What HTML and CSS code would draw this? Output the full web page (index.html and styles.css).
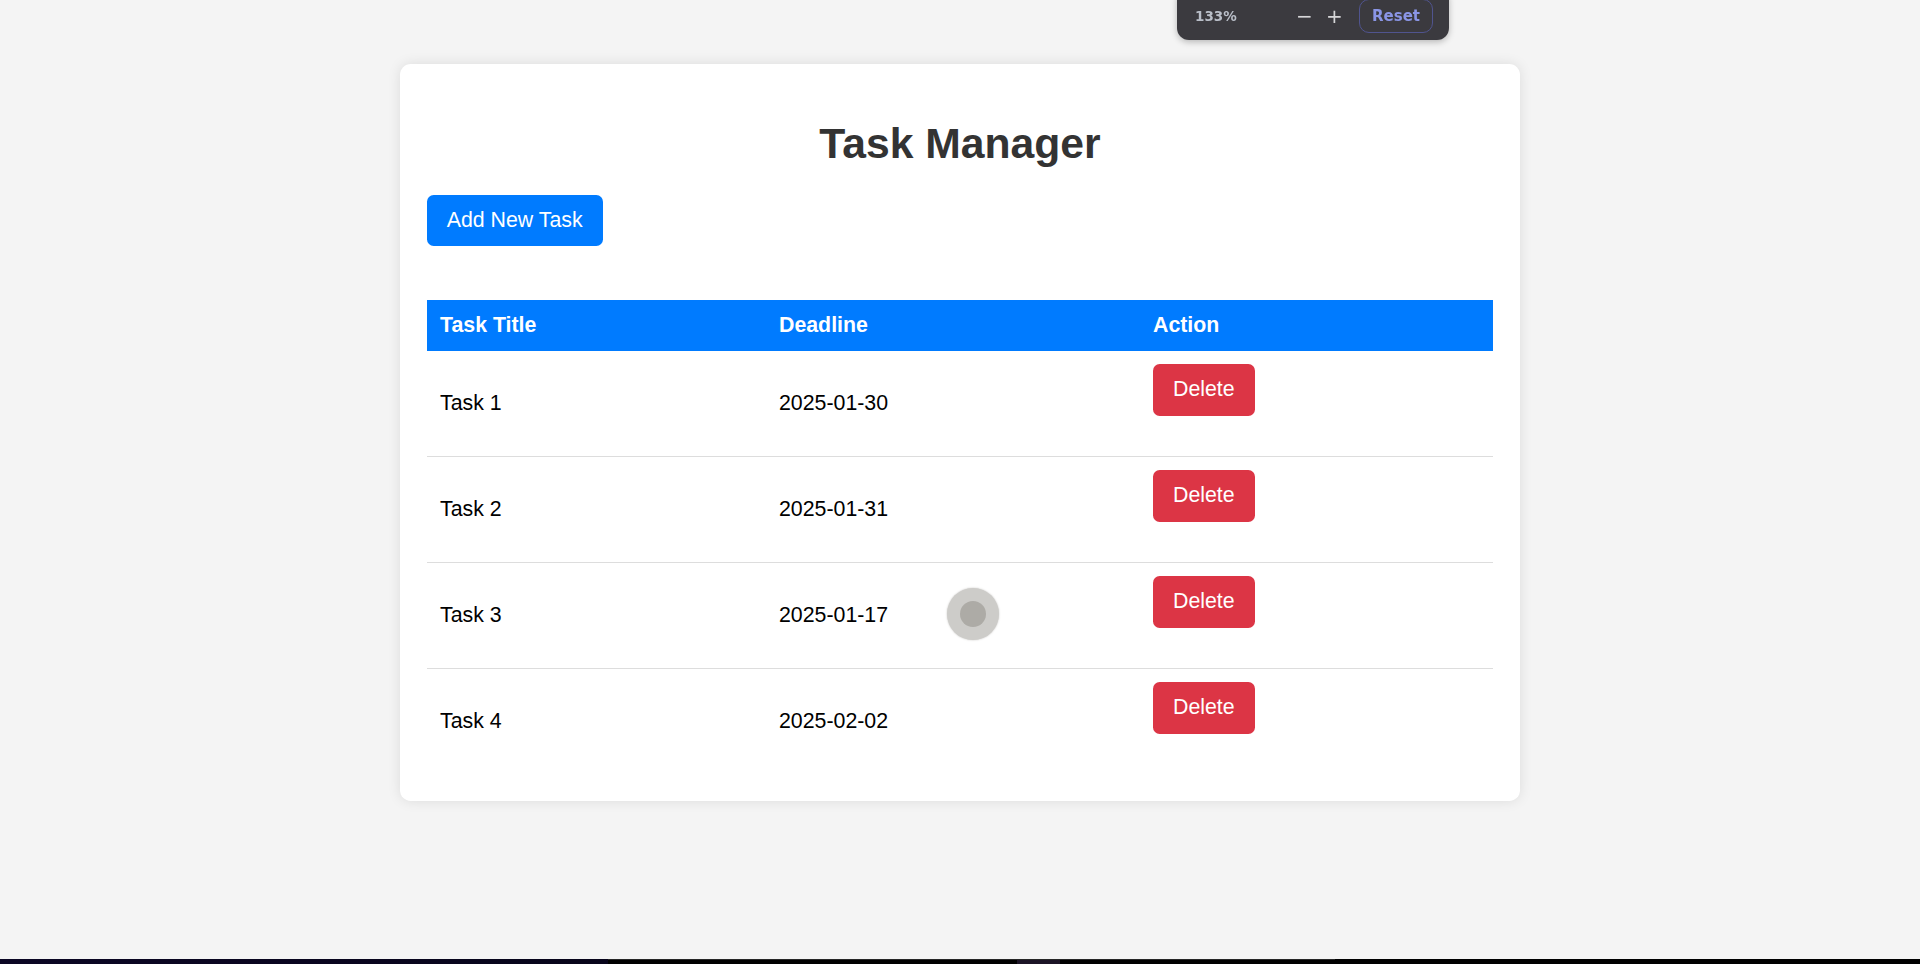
FILE: index.html
```html
<!DOCTYPE html>
<html lang="en">
<head>
<meta charset="utf-8">
<title>Task Manager</title>
<link rel="stylesheet" href="styles.css">
</head>
<body>
<div class="zoom-bar">
  <span class="zoom-level">133%</span>
  <span class="zoom-ctrls">
    <span class="zoom-btn">−</span>
    <span class="zoom-btn">+</span>
  </span>
  <span class="zoom-reset">Reset</span>
</div>

<div class="container">
  <h1 class="title">Task Manager</h1>
  <button class="add-btn">Add New Task</button>
  <table class="tasks">
    <colgroup>
      <col class="c1">
      <col class="c2">
      <col class="c3">
    </colgroup>
    <thead>
      <tr><th>Task Title</th><th>Deadline</th><th>Action</th></tr>
    </thead>
    <tbody>
      <tr><td>Task 1</td><td>2025-01-30</td><td><button class="del-btn">Delete</button></td></tr>
      <tr><td>Task 2</td><td>2025-01-31</td><td><button class="del-btn">Delete</button></td></tr>
      <tr><td>Task 3</td><td>2025-01-17</td><td><button class="del-btn">Delete</button></td></tr>
      <tr><td>Task 4</td><td>2025-02-02</td><td><button class="del-btn">Delete</button></td></tr>
    </tbody>
  </table>
</div>

<div class="cursor"><div class="cursor-dot"></div></div>

<div class="taskbar">
  <div class="tb-left"></div>
  <div class="tb-mid"><div class="tb-app"></div></div>
</div>
</body>
</html>
```

FILE: styles.css
```css
* { box-sizing: border-box; }

html, body {
  margin: 0;
  padding: 0;
  height: 100%;
  overflow: hidden;
}

body {
  background: #f4f4f4;
  font-family: "Liberation Sans", Arial, sans-serif;
  font-size: 21.33px;
  color: #000;
}

.container {
  width: 1120px;
  margin: 64px auto 0;
  padding: 26.67px;
  background: #fff;
  border-radius: 10.67px;
  box-shadow: 0 0 13px rgba(0, 0, 0, 0.1);
}

.title {
  font-size: 42.67px;
  font-weight: bold;
  color: #333;
  text-align: center;
  margin: 28.5px 0 27px;
  line-height: normal;
}

.add-btn {
  display: block;
  font-family: "Liberation Sans", Arial, sans-serif;
  font-size: 21.33px;
  line-height: 24.5px;
  padding: 13.33px 20px;
  background: #007bff;
  color: #fff;
  border: none;
  border-radius: 6.67px;
  margin: 0 0 53.33px;
}

.tasks {
  width: 100%;
  border-collapse: collapse;
  table-layout: fixed;
  margin-top: 0;
}

.c1 { width: 339px; }
.c2 { width: 374px; }

.tasks th {
  background: #007bff;
  color: #fff;
  font-weight: bold;
  text-align: left;
  padding: 13.33px;
  line-height: 24.5px;
}

.tasks td {
  padding: 13.33px;
  line-height: 25px;
  border-bottom: 1px solid #ddd;
  vertical-align: middle;
}

.tasks tbody tr:last-child td { border-bottom-color: #fff; }

.del-btn {
  display: block;
  font-family: "Liberation Sans", Arial, sans-serif;
  font-size: 21.33px;
  line-height: 25px;
  padding: 13.33px 20px;
  background: #dc3545;
  color: #fff;
  border: none;
  border-radius: 6.67px;
  margin: 0 0 26.67px;
}

/* browser zoom popup overlay */
.zoom-bar {
  position: fixed;
  top: -12px;
  left: 1177px;
  width: 272px;
  height: 52px;
  padding: 12px 16px 8px 18px;
  background: #3b3a3f;
  border-radius: 12px;
  box-shadow: 0 2px 6px rgba(0, 0, 0, 0.25);
  display: flex;
  align-items: center;
  font-family: "DejaVu Sans", "Noto Sans", sans-serif;
  z-index: 10;
}

.zoom-level {
  color: #b9bec8;
  font-size: 13.5px;
  font-weight: bold;
  width: 100px;
}

.zoom-ctrls {
  display: flex;
  gap: 14px;
  margin-left: 1px;
  color: #d6d6d8;
  font-size: 20px;
}

.zoom-btn { width: 16px; text-align: center; }

.zoom-reset {
  margin-left: auto;
  width: 74px;
  height: 34px;
  border: 1.5px solid #50548f;
  border-radius: 10px;
  color: #8a95e6;
  font-size: 15px;
  font-weight: bold;
  display: flex;
  align-items: center;
  justify-content: center;
}

/* touch cursor indicator */
.cursor {
  position: absolute;
  left: 947px;
  top: 588px;
  width: 52px;
  height: 52px;
  border-radius: 50%;
  background: #cdccc9;
  box-shadow: 0 0 2px rgba(180, 178, 174, 0.8);
  display: flex;
  align-items: center;
  justify-content: center;
}

.cursor-dot {
  width: 26px;
  height: 26px;
  border-radius: 50%;
  background: #adaba6;
}

/* bottom taskbar sliver */
.taskbar {
  position: fixed;
  left: 0;
  right: 0;
  bottom: 0;
  height: 5px;
  background: #000;
  display: flex;
}

.tb-left {
  width: 608px;
  background: linear-gradient(90deg, #0b0624, #07041a);
}

.tb-mid {
  width: 727px;
  border-top: 1px solid #262626;
  display: flex;
  justify-content: flex-start;
}

.tb-app {
  margin-left: 409px;
  width: 43px;
  background: #1c1426;
}
```
